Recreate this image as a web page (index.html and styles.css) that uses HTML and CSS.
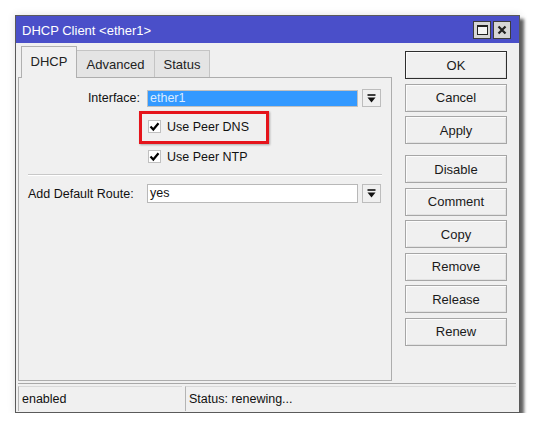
FILE: index.html
```html
<!DOCTYPE html>
<html>
<head>
<meta charset="utf-8">
<link rel="stylesheet" href="styles.css">
</head>
<body>
<div class="window">
  <div class="titlebar">
    <span class="title">DHCP Client &lt;ether1&gt;</span>
    <div class="tbtns">
      <span class="tbtn"><span class="maxicon"></span></span>
      <span class="tbtn">
        <svg width="10" height="10" viewBox="0 0 10 10"><path d="M1.5 1.5 L8.5 8.5 M8.5 1.5 L1.5 8.5" stroke="#222" stroke-width="2.2" fill="none"/></svg>
      </span>
    </div>
  </div>
  <div class="main">
    <div class="left">
      <div class="tabs">
        <div class="tab active">DHCP</div>
        <div class="tab">Advanced</div>
        <div class="tab">Status</div>
      </div>
      <div class="panel">
        <div class="row">
          <span class="label">Interface:</span>
          <span class="input selected">ether1</span>
          <span class="dd"><svg width="9" height="9" viewBox="0 0 9 9"><path d="M0.5 1 H8.5" stroke="#111" stroke-width="1.6"/><path d="M0.5 3.5 H8.5 L4.5 8.5 Z" fill="#111"/></svg></span>
        </div>
        <div class="checks">
          <div class="check"><span class="box"><svg width="11" height="11" viewBox="0 0 11 11"><path d="M1.5 5.5 L4.3 8.5 L9.5 2.2" stroke="#000" stroke-width="2.2" fill="none"/></svg></span>Use Peer DNS</div>
          <div class="check"><span class="box"><svg width="11" height="11" viewBox="0 0 11 11"><path d="M1.5 5.5 L4.3 8.5 L9.5 2.2" stroke="#000" stroke-width="2.2" fill="none"/></svg></span>Use Peer NTP</div>
        </div>
        <div class="sep"></div>
        <div class="row row2">
          <span class="label wide">Add Default Route:</span>
          <span class="input">yes</span>
          <span class="dd"><svg width="9" height="9" viewBox="0 0 9 9"><path d="M0.5 1 H8.5" stroke="#111" stroke-width="1.6"/><path d="M0.5 3.5 H8.5 L4.5 8.5 Z" fill="#111"/></svg></span>
        </div>
        <div class="highlight"></div>
      </div>
    </div>
    <div class="buttons">
      <div class="btn default">OK</div>
      <div class="btn">Cancel</div>
      <div class="btn">Apply</div>
      <div class="btn gapbefore">Disable</div>
      <div class="btn">Comment</div>
      <div class="btn">Copy</div>
      <div class="btn">Remove</div>
      <div class="btn">Release</div>
      <div class="btn">Renew</div>
    </div>
  </div>
  <div class="statusbar">
    <div class="field f1">enabled</div>
    <div class="field f2">Status: renewing...</div>
  </div>
</div>
</body>
</html>
```

FILE: styles.css
```css
* { box-sizing: border-box; }
html, body {
  margin: 0;
  padding: 0;
  background: #ffffff;
}
body {
  font-family: "Liberation Sans", Arial, sans-serif;
  font-size: 12.5px;
  color: #111;
}
.window {
  margin: 15px 0 0 15px;
  width: 505px;
  height: 398px;
  border: 1px solid #5a5a5a;
  background: #f0f0f0;
  box-shadow: 4px 4px 3px rgba(0,0,0,0.6), 0 0 8px rgba(0,0,0,0.12);
  display: flex;
  flex-direction: column;
}
.titlebar {
  height: 27px;
  background: #4a4fc9;
  display: flex;
  align-items: center;
  justify-content: space-between;
  padding: 0 8px 0 6px;
  flex: none;
}
.title {
  color: #fff;
  font-size: 13px;
  padding-top: 2px;
}
.tbtns {
  display: flex;
  gap: 2px;
}
.tbtn {
  width: 18px;
  height: 18px;
  background: #d6d6d6;
  border: 1px solid #3c3c3c;
  display: flex;
  align-items: center;
  justify-content: center;
}
.maxicon {
  width: 11px;
  height: 10px;
  border: 1px solid #222;
  border-top-width: 2px;
  background: #f4f4f4;
}
.main {
  display: flex;
  padding: 3px 0 0 2px;
  flex: none;
}
.left {
  width: 374px;
  display: flex;
  flex-direction: column;
}
.tabs {
  display: flex;
  align-items: flex-end;
  height: 31px;
  padding-left: 3px;
  position: relative;
  z-index: 1;
}
.tab {
  height: 27px;
  padding: 0 9px;
  display: flex;
  align-items: center;
  justify-content: center;
  background: #e4e4e4;
  border: 1px solid #c4c4c4;
  border-bottom: none;
  font-size: 13px;
  color: #222;
}
.tab.active {
  height: 32px;
  margin-bottom: -1px;
  background: #f0f0f0;
  border-color: #b0b0b0;
  padding: 0 10px 3px;
  width: 56px;
}
.tab:nth-child(2) { width: 78px; border-left: none; }
.tab:nth-child(3) { width: 55px; border-left: none; }
.panel {
  position: relative;
  height: 304px;
  border: 1px solid #adadad;
  background: #f0f0f0;
  padding-top: 11px;
}
.row {
  display: flex;
  align-items: center;
  height: 18px;
}
.label {
  width: 121px;
  text-align: right;
  flex: none;
}
.label.wide {
  padding-left: 9px;
  text-align: left;
}
.input {
  width: 211px;
  height: 17px;
  margin-left: 7px;
  border: 1px solid #b8b8b8;
  background: #fff;
  padding: 0 2px;
  line-height: 15px;
  flex: none;
}
.input.selected {
  background: #3399ff;
  color: #d9ebff;
  border-color: #c0c0c0;
}
.dd {
  width: 19px;
  height: 18px;
  margin-left: 4px;
  border: 1px solid #bdbdbd;
  background: #f0f0f0;
  display: flex;
  align-items: center;
  justify-content: center;
  flex: none;
}
.checks {
  display: flex;
  flex-direction: column;
  gap: 17px;
  padding: 13px 0 0 129px;
}
.check {
  display: flex;
  align-items: center;
  height: 13px;
}
.box {
  width: 13px;
  height: 13px;
  background: #fff;
  border: 1px solid #c0c0c0;
  margin-right: 6px;
  display: flex;
  align-items: center;
  justify-content: center;
}
.sep {
  margin: 11px 9px 0 9px;
  height: 2px;
  border-top: 1px solid #c8c8c8;
  border-bottom: 1px solid #ffffff;
}
.row2 {
  margin-top: 8px;
  height: 19px;
}
.row2 .input {
  height: 19px;
  line-height: 17px;
}
.row2 .dd {
  height: 19px;
}
.highlight {
  position: absolute;
  left: 120px;
  top: 33px;
  width: 130px;
  height: 33px;
  border: 3px solid #e5141b;
  box-shadow: 1px 1px 2px rgba(0,0,0,0.3);
}
.buttons {
  margin-left: 13px;
  padding-top: 5px;
  display: flex;
  flex-direction: column;
  gap: 4.5px;
}
.btn {
  width: 102px;
  height: 28px;
  border: 1px solid #a6a6a6;
  box-shadow: inset 1px 1px 0 #fcfcfc, inset -1px -1px 0 #e2e2e2;
  background: #f0f0f0;
  display: flex;
  align-items: center;
  justify-content: center;
  font-size: 13px;
  color: #1a1a1a;
}
.btn.default {
  border-color: #2e2e2e;
}
.btn.gapbefore {
  margin-top: 6.5px;
}
.statusbar {
  margin: 2px 3px 0 2px;
  border-top: 1px solid #a8a8a8;
  flex: 1;
  display: flex;
  padding-top: 2px;
  gap: 3px;
}
.field {
  border-left: 1px solid #b4b4b4;
  border-top: 1px solid #d8d8d8;
  padding: 0 3px;
  display: flex;
  align-items: center;
  height: 25px;
}
.f1 { width: 164px; }
.f2 { flex: 1; }
```
